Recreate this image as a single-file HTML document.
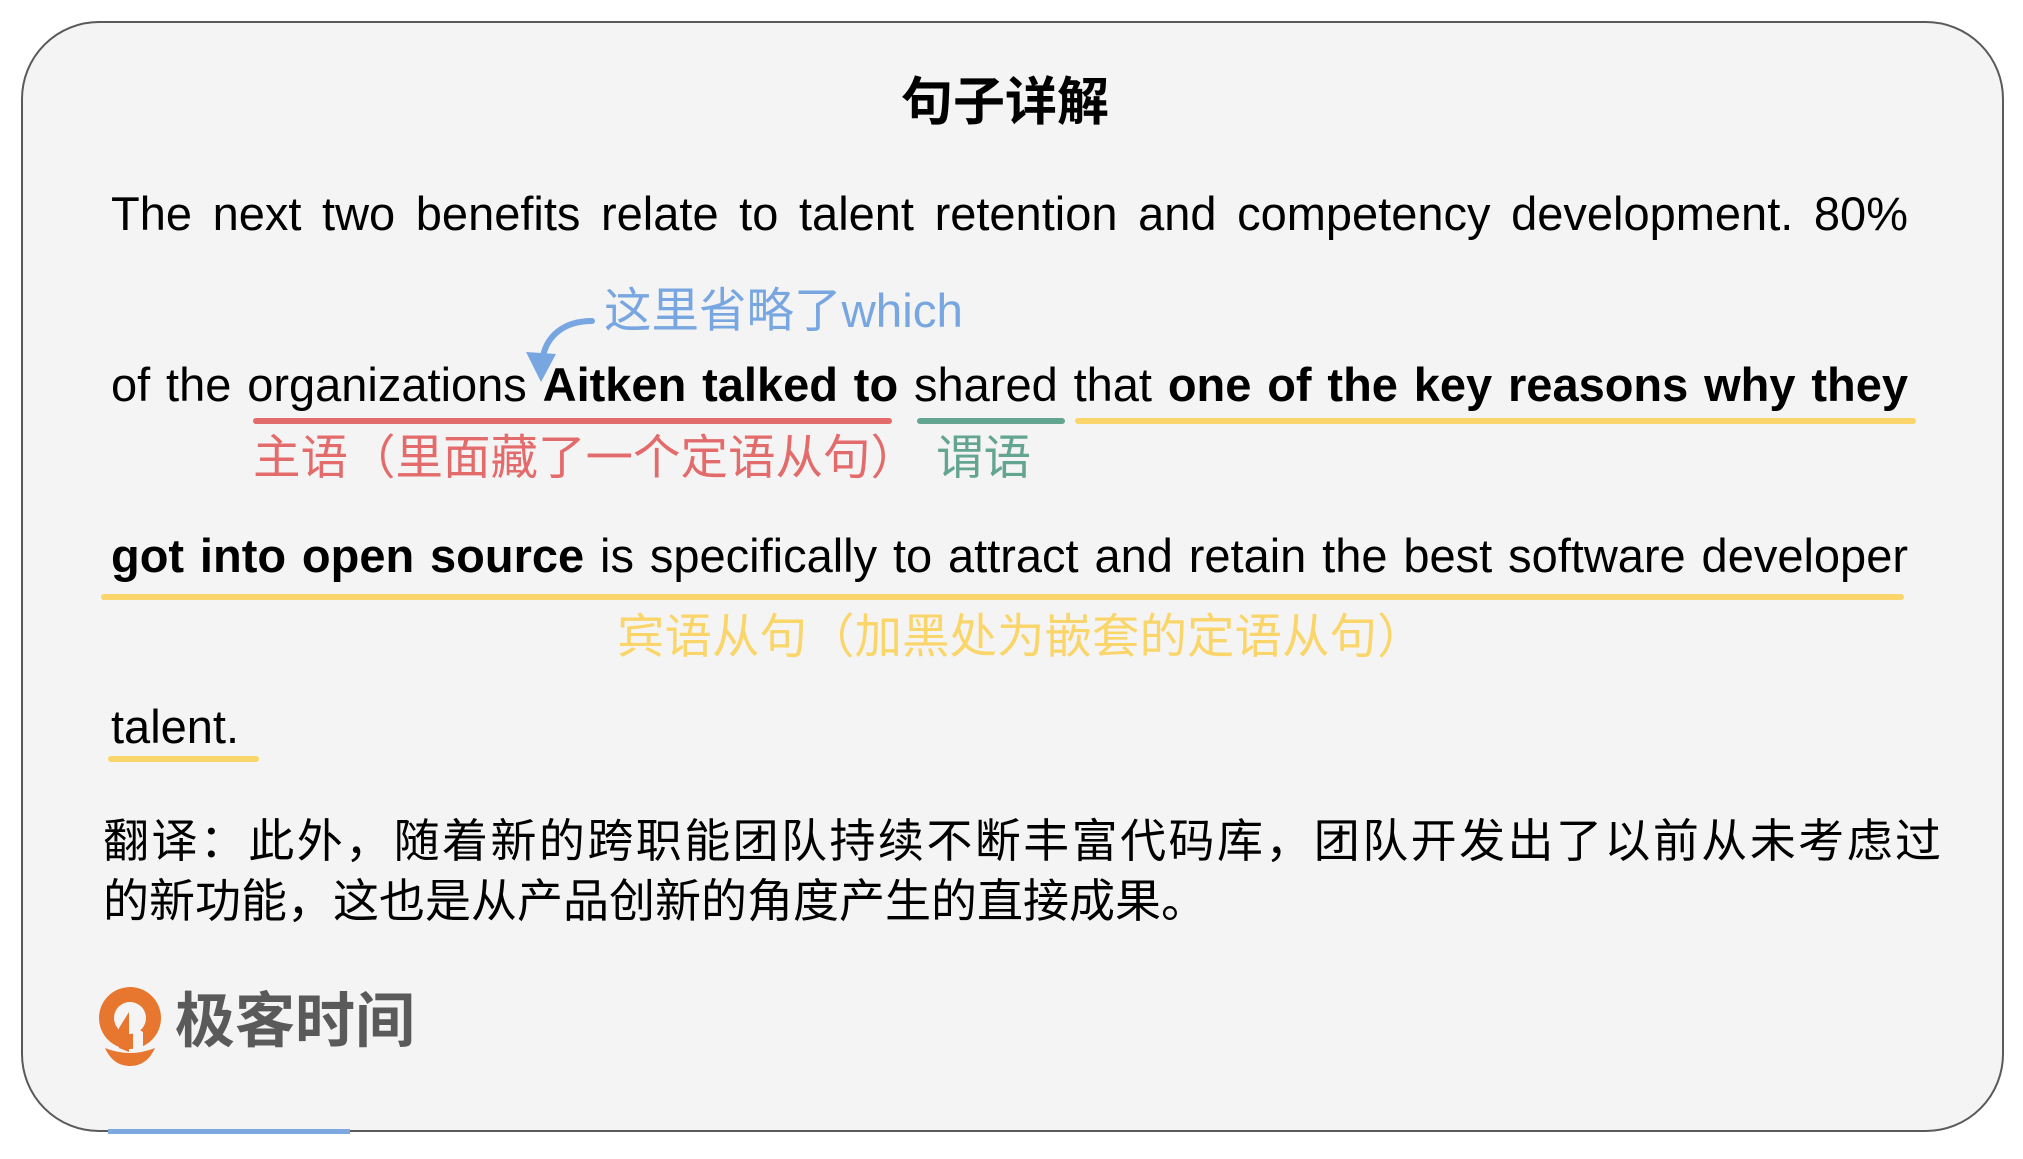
<!DOCTYPE html>
<html><head><meta charset="utf-8"><style>
html,body{margin:0;padding:0;width:2023px;height:1159px;background:#fff;overflow:hidden}
.card{position:absolute;left:21px;top:21px;width:1979px;height:1107px;border:2.5px solid #5a5a5a;border-radius:78px;background:#f4f4f4}
.t{position:absolute;white-space:nowrap;line-height:1;font-family:"Liberation Sans","Noto Sans CJK SC",sans-serif;color:#000}
.j{text-align:justify;text-align-last:justify;width:1797px;left:111px;font-size:47px}
b{font-weight:bold}
.u{position:absolute;height:6px;border-radius:3px}
.cn{font-family:"Liberation Sans","Noto Sans CJK SC",sans-serif;font-size:47.5px}
</style></head><body>
<div class="card"></div>
<div class="t" style="left:0;width:2010px;text-align:center;top:77px;font-size:52px;font-weight:bold">句子详解</div>
<div class="t j" style="top:190px">The next two benefits relate to talent retention and competency development. 80%</div>
<div class="t cn" style="left:604px;top:288px;color:#78a6e0">这里省略了which</div>
<svg style="position:absolute;left:0;top:0" width="2023" height="1159">
<path d="M592 321 C565 321 545 335 542 362" fill="none" stroke="#78a6e0" stroke-width="6" stroke-linecap="round"/>
<path d="M526 352 L541 382 L556 354 Z" fill="#78a6e0"/>
<rect x="108" y="1129" width="242" height="5" fill="#7ea8e0"/>
<g transform="translate(97,988)">
<circle cx="33" cy="30" r="31" fill="#e7772f"/>
<circle cx="33" cy="30" r="16" fill="#f4f4f4"/>
<path d="M22 40 L32 24 L32 64 L22 60 Z" fill="#e7772f"/>
<path d="M36 38 L46 44 L46 62 L36 64 Z" fill="#f4f4f4"/>
<path d="M8 60 Q33 70 58 60 Q50 78 33 78 Q16 78 8 60 Z" fill="#e7772f"/>
</g>
</svg>
<div class="t j" style="top:361px">of the organizations <b>Aitken talked to</b> shared that <b>one of the key reasons why they</b></div>
<div class="u" style="left:253px;top:418px;width:639px;background:#e36b6b"></div>
<div class="u" style="left:917px;top:418px;width:148px;background:#64a592"></div>
<div class="u" style="left:1075px;top:418px;width:841px;background:#fad56a"></div>
<div class="t cn" style="left:253px;top:435px;color:#e36b6b">主语（里面藏了一个定语从句）</div>
<div class="t cn" style="left:936px;top:435px;color:#64a592">谓语</div>
<div class="t j" style="top:532px"><b>got into open source</b> is specifically to attract and retain the best software developer</div>
<div class="u" style="left:101px;top:594px;width:1803px;background:#fad56a"></div>
<div class="t cn" style="left:617px;top:614px;color:#fad56a">宾语从句（加黑处为嵌套的定语从句）</div>
<div class="t" style="left:111px;top:703px;font-size:47px">talent.</div>
<div class="u" style="left:108px;top:756px;width:151px;background:#fad56a"></div>
<div class="t" style="left:103px;top:818px;font-size:46px;width:1838px;text-align:justify;text-align-last:justify">翻译：此外，随着新的跨职能团队持续不断丰富代码库，团队开发出了以前从未考虑过</div>
<div class="t" style="left:103px;top:878px;font-size:46px">的新功能，这也是从产品创新的角度产生的直接成果。</div>
<div class="t" style="left:175px;top:992px;font-size:60px;font-weight:bold;color:#5a5a5a">极客时间</div>
</body></html>
